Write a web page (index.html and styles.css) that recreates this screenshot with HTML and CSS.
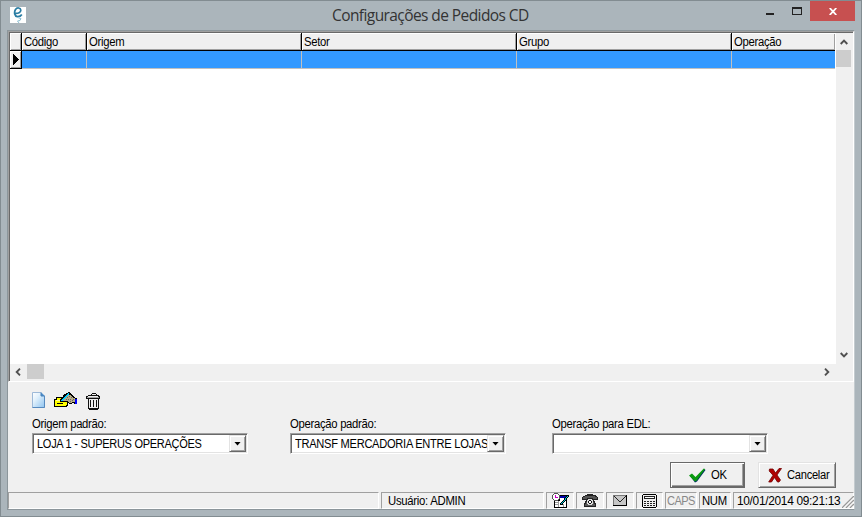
FILE: index.html
```html
<!DOCTYPE html>
<html lang="pt-BR">
<head>
<meta charset="utf-8">
<title>Configurações de Pedidos CD</title>
<link rel="stylesheet" href="styles.css">
</head>
<body>
<div class="window">
  <header class="titlebar">
    <svg class="appicon" width="16" height="16" viewBox="0 0 16 16"><rect width="16" height="16" fill="#fff"/><path d="M5 6.200C8 6.600 11 5.500 10.800 3C10.500 .6 7 .2 5.500 2.500C3.800 5.500 4.500 9.300 7.300 9.600C9.500 9.800 11 8.800 11.800 7.500" fill="none" stroke="#2a7da3" stroke-width="1.700"/><path d="M8.500 11L11 11.500L10 13.500L7.500 14L9 16" fill="none" stroke="#8dbfd2"/></svg>
    <h1 class="title">Configurações de Pedidos CD</h1>
    <svg class="min" width="8" height="2"><rect width="8" height="2" fill="#222"/></svg>
    <svg class="max" width="10" height="8"><path d="M0 0H10V8H0ZM1 2V7H9V2Z" fill="#222" fill-rule="evenodd"/></svg>
    <div class="close"><svg width="8" height="7" viewBox="0 0 8 7"><path d="M.7 0L7.300 7M7.300 0L.7 7" stroke="#fff" stroke-width="1.800"/></svg></div>
  </header>
  <main class="client">
    <section class="grid">
      <div class="view">
        <div class="table">
          <div class="head ind"></div><div class="head"><span class="t">Código</span></div><div class="head"><span class="t">Origem</span></div><div class="head"><span class="t">Setor</span></div><div class="head"><span class="t">Grupo</span></div><div class="head last"><span class="t">Operação</span></div>
          <div class="mark"><svg width="6" height="11" shape-rendering="crispEdges"><path d="M0 0L6 5.500L0 11Z"/></svg></div><div class="cell"></div><div class="cell"></div><div class="cell"></div><div class="cell"></div><div class="cell last"></div>
        </div>
        <div class="vscroll">
          <svg class="up" width="8" height="6"><path d="M.7 5L4 1.700L7.300 5" class="chev"/></svg>
          <div class="vthumb"></div>
          <svg class="down" width="8" height="6"><path d="M.7 1L4 4.300L7.300 1" class="chev"/></svg>
        </div>
      </div>
      <div class="hscroll">
        <svg width="6" height="8"><path d="M5 .7L1.700 4L5 7.300" class="chev"/></svg>
        <div class="hthumb"></div>
        <svg class="right" width="6" height="8"><path d="M1 .7L4.300 4L1 7.300" class="chev"/></svg>
      </div>
    </section>
    <section class="form">
      <div class="tools">
        <svg width="13" height="16" viewBox="0 0 13 16"><defs><linearGradient id="page" x1="0" y1="0" x2="1" y2="1"><stop offset="0" stop-color="#fff"/><stop offset=".35" stop-color="#e2f1fc"/><stop offset="1" stop-color="#8ec3ef"/></linearGradient></defs><path d="M.5 .5H9L12.500 4V15.500H.5Z" fill="url(#page)" stroke="#9db9d8"/><path d="M9 .5V4H12.500" fill="#4589c8" stroke="#4a83ba"/><path d="M12.500 4V15.500H.5" fill="none" stroke="#5689be"/></svg>
        <svg class="edit" width="24" height="16" viewBox="0 0 24 16" shape-rendering="crispEdges"><path d="M0 7H2V5H8V7H14V14H13V15H0Z" fill="#000"/><path d="M1 8H3V6H7V8H13V13H12V14H1Z" fill="#ff0"/><path d="M3 11H9V12H3Z" fill="#000"/><path d="M2 8H8V9H2Z" fill="#ff9"/><path d="M8 5H9V3H10V2H12V1H17V2H18V3H19V4H20V5H21V6H23V12H20V11H18V12H15V11H13V10H8Z" fill="#000"/><path d="M9 5H10V4H11V3H17V4H18V5H19V6H21V10H18V11H15V10H14V9H9Z" fill="#b5ab86"/><path d="M13 5H14V6H13ZM15 4H16V5H15ZM16 7H17V8H16ZM14 7H15V8H14ZM18 8H19V9H18ZM17 5H18V6H17ZM16 9H17V10H16ZM12 7H13V8H12ZM19 7H20V8H19Z" fill="#666"/><path d="M21 7H23V12H21Z" fill="#00f"/><path d="M6 10V7H8V5H10V3H12V1H14V0H16V2H14V4H12V6H10V8H8V10Z" fill="#000"/><path d="M7 9V8H8V7H9V6H10V5H11V4H12V3H13V2H14V1H15V2H15V3H14V4H13V5H12V6H11V7H10V8H9V9Z" fill="#0cf"/></svg>
        <svg class="trash" width="14" height="17" viewBox="0 0 14 17" shape-rendering="crispEdges"><path d="M5 1H6V0H10V1H11V2H13V3H14V6H13V16H12V17H3V16H2V6H0V3H2V2H5Z" fill="#111"/><path d="M6 1H10V2H6ZM2 3H12V4H2ZM3 6H12V15H3Z" fill="#f0f0f0"/><path d="M1 4H13V5H1Z" fill="#aaa"/><path d="M4 7H5V14H4ZM7 7H8V14H7ZM10 7H11V14H10Z" fill="#111"/></svg>
      </div>
      <div class="fields">
        <div class="field"><label><span class="l">Origem padrão:</span></label><div class="combo"><div class="value"><span class="v1">LOJA 1 - SUPERUS OPERAÇÕES</span></div><i class="drop"></i></div></div>
        <div class="field"><label><span class="l">Operação padrão:</span></label><div class="combo"><div class="value"><span class="v2">TRANSF MERCADORIA ENTRE LOJAS</span></div><i class="drop"></i></div></div>
        <div class="field"><label><span class="l">Operação para EDL:</span></label><div class="combo"><div class="value"></div><i class="drop"></i></div></div>
      </div>
      <div class="actions">
        <button class="btn ok"><svg width="17" height="15" viewBox="0 0 17 15"><path d="M1 8L3 7L6.500 10.500L15.500 1L16.500 2L8 13.500L6 14.500Z" fill="#003060"/><path d="M0 7.500L3 5.500L6.500 9L14.800 .5L16 1L7.800 12.500L6 13.500Z" fill="#0a9a10"/></svg><span class="t">OK</span></button>
        <button class="btn cancel"><svg width="14" height="15" viewBox="0 0 14 15"><path d="M1.500 1L5 1L7.500 5L11 .5H13.500L9 7L12.500 12L11 14H9.500L6.500 9.500L3.500 14H.7L5 7.200L1.200 3Z" fill="#b00000" stroke="#720000" stroke-width=".8"/></svg><span class="t">Cancelar</span></button>
      </div>
    </section>
    <footer class="status">
      <div class="pane"></div>
      <div class="pane user"><span class="u">Usuário: ADMIN</span></div>
      <div class="pane icon"><svg width="17" height="16" viewBox="0 0 17 16" shape-rendering="crispEdges"><path d="M2 2H15V15H2Z" fill="#000"/><path d="M3 8H14V14H3Z" fill="#fff"/><path d="M8 3H14V5H8Z" fill="#00a"/><path d="M8 5H14V8H8Z" fill="#fff"/><path d="M3 9H6V10H3ZM3 11H6V12H3ZM6 8H7V14H6ZM11 11H12V14H11Z" fill="#999"/><path d="M2 0H6V1H7V2H8V6H7V7H6V8H2V7H1V6H0V2H1V1H2Z" fill="#555"/><path d="M2 1H6V2H7V6H6V7H2V6H1V2H2Z" fill="#fff"/><path d="M3 2H4V4H6V5H3Z" fill="#c0c"/><path d="M8 12V10H9V9H10V8H11V7H12V5H13V4H14V3H15V2H17V4H16V5H15V6H14V8H13V9H12V10H11V12Z" fill="#000"/><path d="M9 11V10H10V9H11V8H12V7H13V5H14V4H15V3H16V4H15V5H14V7H13V8H12V9H11V10H10V11Z" fill="#0cd"/></svg></div>
      <div class="pane icon"><svg width="16" height="14" viewBox="0 0 16 14" shape-rendering="crispEdges"><path d="M3 1H5V0H11V1H14V2H15V3H16V6H12V7H13V9H14V13H2V9H3V7H4V6H0V3H1V2H3Z" fill="#222"/><path d="M3 2H13V3H15V5H11V4H5V5H1V3H3ZM4 8H12V10H13V12H3V10H4Z" fill="#555"/><path d="M6 5H10V6H11V10H10V11H6V10H5V6H6Z" fill="#ddd"/><path d="M7 6H9V7H10V9H9V10H7V9H6V7H7Z" fill="#111"/><path d="M7 7H9V9H7Z" fill="#fff"/></svg></div>
      <div class="pane icon"><svg width="14" height="11" viewBox="0 0 14 11" shape-rendering="crispEdges"><path d="M0 0H14V11H0Z" fill="#777"/><path d="M1 1H13V10H1Z" fill="#c6c6c6"/><path d="M13 0H14V11H0V10H13Z" fill="#000"/><path d="M1 1H2V2H3V3H4V4H5V5H6V6H8V5H9V4H10V3H11V2H12V1H13V2H12V3H11V4H10V5H9V6H8V7H6V6H5V5H4V4H3V3H2V2H1Z" fill="#222"/></svg></div>
      <div class="pane icon calc"><svg width="15" height="14" viewBox="0 0 15 14" shape-rendering="crispEdges"><path d="M1 0H14V1H15V13H14V14H1V13H0V1H1Z" fill="#000"/><path d="M1 1H14V13H1Z" fill="#f0f0f0"/><path d="M2 2H13V5H2Z" fill="#222"/><path d="M3 3H12V4H3Z" fill="#fff"/><path d="M2 7H4V8H2ZM5 7H7V8H5ZM8 7H10V8H8ZM11 7H13V8H11ZM2 9H4V10H2ZM5 9H7V10H5ZM8 9H10V10H8ZM11 9H13V10H11ZM2 11H4V12H2ZM5 11H7V12H5ZM8 11H10V12H8ZM11 11H13V12H11Z" fill="#222"/></svg></div>
      <div class="pane caps"><span class="c">CAPS</span></div>
      <div class="pane num"><span class="n">NUM</span></div>
      <div class="pane clock"><span class="k">10/01/2014 09:21:13</span></div>
      <svg class="grip" width="12" height="12"><path d="M0 12L12 0M4 12L12 4M8 12L12 8" stroke="#999" stroke-width="1.400"/><path d="M1.500 12L12 1.500M5.500 12L12 5.500M9.500 12L12 9.500" stroke="#fff" stroke-width=".8"/></svg>
    </footer>
  </main>
</div>
</body>
</html>
```
FILE: styles.css
```css
* { box-sizing: border-box; }
body { margin: 0; font: 12px/14px "Liberation Sans", Arial, sans-serif; color: #000; letter-spacing: -.3px; }
svg { display: block; flex: none; }
.window { width: 862px; height: 517px; background: #abb5bb; border: 1px solid #828c91; padding: 0 6px 7px; }
.titlebar { height: 29px; display: flex; align-items: flex-start; }
.appicon { margin: 6px 0 0 3px; }
.title { flex: 1; margin: 4px 0 0; padding-left: 306px; font: 15.500px/20px "Open Sans", "Noto Sans", sans-serif; letter-spacing: -.58px; color: #333; white-space: nowrap; }
.min { margin: 12px 18px 0 0; }
.max { margin: 6px 8px 0 0; }
.close { width: 45px; height: 20px; background: #c75050; display: flex; align-items: center; justify-content: center; }
.client { height: 480px; border: 1px solid #8c969b; border-right-color: #c4cbcf; background: #f0f0f0; display: flex; flex-direction: column; }
.grid { height: 351px; border: 1px solid; border-color: #a0a0a0 #fff #fff #a0a0a0; box-shadow: inset 1px 1px #696969; padding: 1px; display: flex; flex-direction: column; }
.view { height: 331px; display: flex; background: #fff; box-shadow: -1px 0 #696969; }
.table { flex: 1; display: grid; grid-template-columns: 12px 65px 215px 215px 215px 1fr; grid-template-rows: 18px 18px; }
.head { height: 18px; background: #f0f0f0; border-right: 1px solid #000; border-bottom: 1px solid #000; box-shadow: inset 1px 1px #fff, inset -1px -1px #a0a0a0; padding: 2px 0 0 2px; white-space: nowrap; }
.head.last { border-right: 0; }
.mark { background: #f0f0f0; border-right: 1px solid #000; border-bottom: 1px solid #000; box-shadow: inset 1px 1px #fff, inset -1px -1px #a0a0a0; padding: 3px 0 0 3px; }
.cell { background: #3399ff; border-right: 1px solid #c0c0c0; border-bottom: 1px solid #c0c0c0; }
.cell.last { border-right: 0; }
.vscroll { width: 17px; background: #f0f0f0; border-left: 1px solid #fff; display: flex; flex-direction: column; align-items: center; padding-top: 6px; }
.vthumb { width: 15px; height: 17px; margin: 5px 1px 0 0; background: #cdcdcd; }
.down { margin-top: 285px; }
.chev { fill: none; stroke: #505050; stroke-width: 1.900; }
.hscroll { height: 15px; display: flex; align-items: center; padding-left: 5px; }
.hthumb { width: 17px; height: 15px; margin-left: 6px; background: #cdcdcd; }
.right { margin-left: 780px; }
.form { height: 110px; padding: 10px 16px 0 24px; }
.tools { height: 17px; display: flex; }
.edit { margin-left: 9px; }
.trash { margin: 1px 0 0 8px; }
.fields { display: grid; grid-template-columns: 258px 262px 216px; margin-top: 8px; }
.field { width: 216px; }
.t, .l, .v1, .v2, .u, .c, .n, .k { display: inline-block; transform-origin: 0 50%; }
.t { transform: scaleX(.94); }
.l { transform: scaleX(.94); }
.v1 { transform: scaleX(.917); }
.v2 { transform: scaleX(.925); }
.u { transform: scaleX(.945); }
.c { transform: scaleX(.92); }
.n { transform: scaleX(.94); }
.k { transform: scaleX(.99); }
label { display: block; height: 16px; white-space: nowrap; }
.combo { height: 21px; border: 1px solid; border-color: #a0a0a0 #fff #fff #a0a0a0; box-shadow: inset 1px 1px #696969, inset -1px -1px #e3e3e3; background: #fff; display: flex; padding: 1px; }
.value { width: 196px; overflow: hidden; white-space: nowrap; padding: 2px 0 0 3px; }
.drop { width: 17px; height: 17px; flex: none; background: #f0f0f0; border: 1px solid; border-color: #e3e3e3 #696969 #696969 #e3e3e3; box-shadow: inset 1px 1px #fff, inset -1px -1px #a0a0a0; display: flex; align-items: center; justify-content: center; }
.drop::after { content: ""; width: 7px; height: 4px; background: #000; clip-path: polygon(0 0, 100% 0, 50% 100%); }
.actions { display: flex; justify-content: flex-end; gap: 13px; margin-top: 8px; padding-right: 2px; }
.btn { height: 26px; padding: 0; background: #f0f0f0; border: 1px solid; border-color: #e3e3e3 #696969 #696969 #e3e3e3; box-shadow: inset 1px 1px #fff, inset -1px -1px #a0a0a0; color: #000; font: inherit; letter-spacing: inherit; display: flex; align-items: center; }
.ok { width: 75px; border-color: #696969; box-shadow: inset 1px 1px #fff, inset -1px -1px #696969, inset -2px -2px #a0a0a0; padding-left: 18px; gap: 5px; }
.cancel { width: 78px; padding-left: 9px; gap: 5px; }
.cancel .t { transform: scaleX(.93); }
.status { height: 17px; display: flex; gap: 2px; position: relative; }
.pane { height: 17px; width: 371px; border: 1px solid; border-color: #a0a0a0 #fff #fff #a0a0a0; padding: 1px 0 0 2px; white-space: nowrap; overflow: hidden; }
.user { width: 163px; padding-left: 6px; }
.icon { width: 28px; padding: 0; display: flex; align-items: center; justify-content: center; }
.calc { width: 27px; }
.caps { width: 32px; padding-left: 1px; color: #888; letter-spacing: -.6px; }
.num { width: 32px; }
.clock { width: 121px; padding-left: 3px; }
.grip { position: absolute; right: 0; bottom: 1px; }
```
